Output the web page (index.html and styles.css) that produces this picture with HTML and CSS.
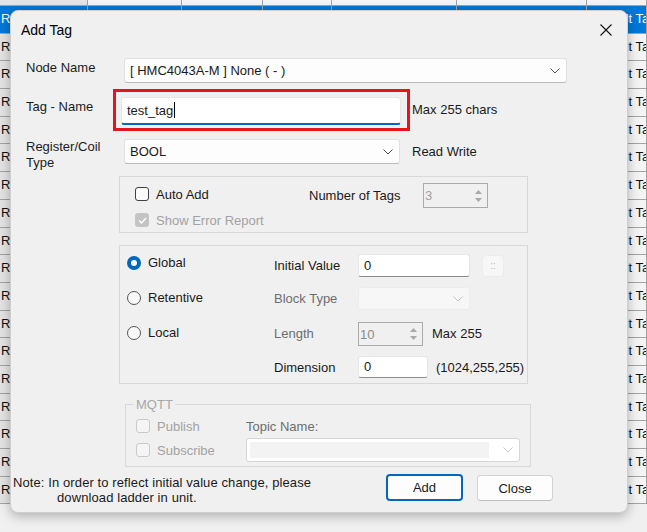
FILE: index.html
```html
<!DOCTYPE html>
<html lang="en">
<head>
    <meta charset="UTF-8">
    <meta name="viewport" content="width=device-width, initial-scale=1.0">
    <title>Add Tag</title>
    <link rel="stylesheet" href="styles.css">
</head>
<body>

    <div class="sheet">
        <div class="row head"><div class="cell"></div><div class="cell"></div><div class="cell"></div><div class="cell"></div><div class="cell"></div><div class="cell"></div><div class="cell"></div></div>
        <div class="row selected"><div class="cell">Read Write</div><div class="cell">300000</div><div class="cell">-</div><div class="cell">0</div><div class="cell"></div><div class="cell">HMC4043A-M</div><div class="cell">Default Tag</div></div>
        <div class="row"><div class="cell">Read Write</div><div class="cell">300001</div><div class="cell">-</div><div class="cell">0</div><div class="cell"></div><div class="cell">HMC4043A-M</div><div class="cell">Default Tag</div></div>
        <div class="row"><div class="cell">Read Write</div><div class="cell">300002</div><div class="cell">-</div><div class="cell">0</div><div class="cell"></div><div class="cell">HMC4043A-M</div><div class="cell">Default Tag</div></div>
        <div class="row"><div class="cell">Read Write</div><div class="cell">300003</div><div class="cell">-</div><div class="cell">0</div><div class="cell"></div><div class="cell">HMC4043A-M</div><div class="cell">Default Tag</div></div>
        <div class="row"><div class="cell">Read Write</div><div class="cell">300004</div><div class="cell">-</div><div class="cell">0</div><div class="cell"></div><div class="cell">HMC4043A-M</div><div class="cell">Default Tag</div></div>
        <div class="row"><div class="cell">Read Write</div><div class="cell">300005</div><div class="cell">-</div><div class="cell">0</div><div class="cell"></div><div class="cell">HMC4043A-M</div><div class="cell">Default Tag</div></div>
        <div class="row"><div class="cell">Read Write</div><div class="cell">300006</div><div class="cell">-</div><div class="cell">0</div><div class="cell"></div><div class="cell">HMC4043A-M</div><div class="cell">Default Tag</div></div>
        <div class="row"><div class="cell">Read Write</div><div class="cell">300007</div><div class="cell">-</div><div class="cell">0</div><div class="cell"></div><div class="cell">HMC4043A-M</div><div class="cell">Default Tag</div></div>
        <div class="row"><div class="cell">Read Write</div><div class="cell">300008</div><div class="cell">-</div><div class="cell">0</div><div class="cell"></div><div class="cell">HMC4043A-M</div><div class="cell">Default Tag</div></div>
        <div class="row"><div class="cell">Read Write</div><div class="cell">300009</div><div class="cell">-</div><div class="cell">0</div><div class="cell"></div><div class="cell">HMC4043A-M</div><div class="cell">Default Tag</div></div>
        <div class="row"><div class="cell">Read Write</div><div class="cell">300010</div><div class="cell">-</div><div class="cell">0</div><div class="cell"></div><div class="cell">HMC4043A-M</div><div class="cell">Default Tag</div></div>
        <div class="row"><div class="cell">Read Write</div><div class="cell">300011</div><div class="cell">-</div><div class="cell">0</div><div class="cell"></div><div class="cell">HMC4043A-M</div><div class="cell">Default Tag</div></div>
        <div class="row"><div class="cell">Read Write</div><div class="cell">300012</div><div class="cell">-</div><div class="cell">0</div><div class="cell"></div><div class="cell">HMC4043A-M</div><div class="cell">Default Tag</div></div>
        <div class="row"><div class="cell">Read Write</div><div class="cell">300013</div><div class="cell">-</div><div class="cell">0</div><div class="cell"></div><div class="cell">HMC4043A-M</div><div class="cell">Default Tag</div></div>
        <div class="row"><div class="cell">Read Write</div><div class="cell">300014</div><div class="cell">-</div><div class="cell">0</div><div class="cell"></div><div class="cell">HMC4043A-M</div><div class="cell">Default Tag</div></div>
        <div class="row"><div class="cell">Read Write</div><div class="cell">300015</div><div class="cell">-</div><div class="cell">0</div><div class="cell"></div><div class="cell">HMC4043A-M</div><div class="cell">Default Tag</div></div>
        <div class="row"><div class="cell">Read Write</div><div class="cell">300016</div><div class="cell">-</div><div class="cell">0</div><div class="cell"></div><div class="cell">HMC4043A-M</div><div class="cell">Default Tag</div></div>
        <div class="row"><div class="cell">Read Only</div><div class="cell">300000</div><div class="cell">-</div><div class="cell">0</div><div class="cell"></div><div class="cell">HMC4043A-M</div><div class="cell">Default Tag</div></div>
    </div>

    <div class="dialog">
        <div class="titlebar">
            <span>Add Tag</span>
            <svg class="close-x" width="12" height="12" viewBox="0 0 12 12"><path d="M0.5 0.5 L11.5 11.5 M11.5 0.5 L0.5 11.5" stroke="#111" stroke-width="1.1" fill="none"/></svg>
        </div>

        <div class="content">
            <div class="field node-row">
                <div class="field-label">Node Name</div>
                <div class="combo wide">
                    <span>[ HMC4043A-M ] None ( - )</span>
                    <svg width="10" height="6" viewBox="0 0 10 6"><polyline points="0.5,0.5 5,5 9.5,0.5" stroke="#555" fill="none"/></svg>
                </div>
            </div>

            <div class="field tag-row">
                <div class="field-label">Tag - Name</div>
                <div class="highlight">
                    <div class="text-input focused">test_tag<span class="caret"></span></div>
                </div>
                <div class="hint tall">Max 255 chars</div>
            </div>

            <div class="field type-row">
                <div class="field-label two-line">Register/Coil<br>Type</div>
                <div class="combo mid">
                    <span>BOOL</span>
                    <svg width="10" height="6" viewBox="0 0 10 6"><polyline points="0.5,0.5 5,5 9.5,0.5" stroke="#555" fill="none"/></svg>
                </div>
                <div class="hint rw">Read Write</div>
            </div>

            <div class="group auto-group">
                <div class="checks">
                    <div class="check"><span class="box"></span>Auto Add</div>
                    <div class="check disabled"><span class="box ticked"><svg width="9" height="7" viewBox="0 0 9 7"><polyline points="1,3.5 3.5,6 8,1" stroke="#fff" stroke-width="1.3" fill="none"/></svg></span>Show Error Report</div>
                </div>
                <div class="num-label">Number of Tags</div>
                <div class="spin">
                    <span class="spin-val">3</span>
                    <span class="spin-btns">
                        <svg width="7" height="4" viewBox="0 0 7 4"><polygon points="0,4 3.5,0 7,4" fill="#a8a8a8"/></svg>
                        <svg width="7" height="4" viewBox="0 0 7 4"><polygon points="0,0 3.5,4 7,0" fill="#a8a8a8"/></svg>
                    </span>
                </div>
            </div>

            <div class="group scope-group">
                <div class="radios">
                    <div class="radio-row"><span class="radio on"></span>Global</div>
                    <div class="radio-row"><span class="radio"></span>Retentive</div>
                    <div class="radio-row"><span class="radio"></span>Local</div>
                </div>
                <div class="props">
                    <div class="prop-label">Initial Value</div>
                    <div class="prop-value">
                        <div class="text-input small">0</div>
                        <div class="dots">::</div>
                    </div>
                    <div class="prop-label disabled-text">Block Type</div>
                    <div class="prop-value">
                        <div class="combo small off">
                            <span></span>
                            <svg width="10" height="6" viewBox="0 0 10 6"><polyline points="0.5,0.5 5,5 9.5,0.5" stroke="#c4c4c4" fill="none"/></svg>
                        </div>
                    </div>
                    <div class="prop-label disabled-text">Length</div>
                    <div class="prop-value">
                        <div class="spin len">
                            <span class="spin-val">10</span>
                            <span class="spin-btns">
                                <svg width="7" height="4" viewBox="0 0 7 4"><polygon points="0,4 3.5,0 7,4" fill="#a8a8a8"/></svg>
                                <svg width="7" height="4" viewBox="0 0 7 4"><polygon points="0,0 3.5,4 7,0" fill="#a8a8a8"/></svg>
                            </span>
                        </div>
                        <span class="after-len">Max 255</span>
                    </div>
                    <div class="prop-label">Dimension</div>
                    <div class="prop-value">
                        <div class="text-input dim">0</div>
                        <span class="after-dim">(1024,255,255)</span>
                    </div>
                </div>
            </div>

            <div class="group mqtt-group">
                <span class="legend">MQTT</span>
                <div class="check off"><span class="box"></span>Publish</div>
                <div class="topic-label">Topic Name:</div>
                <div class="check off"><span class="box"></span>Subscribe</div>
                <div class="combo topic off">
                    <span class="topic-fill"></span>
                    <svg width="10" height="6" viewBox="0 0 10 6"><polyline points="0.5,0.5 5,5 9.5,0.5" stroke="#c4c4c4" fill="none"/></svg>
                </div>
            </div>

            <div class="footer">
                <div class="note">Note: In order to reflect initial value change, please<br><span class="note-2">download ladder in unit.</span></div>
                <button class="btn primary">Add</button>
                <button class="btn">Close</button>
            </div>
        </div>
    </div>

</body>
</html>
```

FILE: styles.css
```css
* {
    box-sizing: border-box;
}
body {
    margin: 0;
    font-family: "Liberation Sans", Arial, sans-serif;
    font-size: 13px;
    color: #1a1a1a;
    background-color: #f0f0f0;
    overflow: hidden;
}

/* background grid */
.sheet {
    width: 647px;
    height: 532px;
    overflow: hidden;
}
.row {
    display: grid;
    grid-template-columns: 88px 94px 81px 69px 125px 130px 1fr;
    height: 27.7px;
}
.row.head {
    height: 6px;
}
.cell {
    border-right: 1px solid #a3a3a3;
    border-bottom: 1px solid #a3a3a3;
    padding: 0 5px;
    line-height: 26px;
    white-space: nowrap;
    overflow: hidden;
    background-color: #f4f4f4;
    color: #111;
}
.cell:first-child {
    padding-left: 1px;
    background-color: #e4e4e4;
}
.cell:last-child {
    padding-left: 4px;
}
.selected .cell {
    background-color: #0078d7;
    color: white;
}

/* dialog */
.dialog {
    position: absolute;
    left: 10px;
    top: 10px;
    width: 618px;
    height: 503px;
    background-color: #f0f0f0;
    border: 1px solid #cfcfcf;
    border-radius: 8px;
    box-shadow: 0 3px 12px rgba(0, 0, 0, 0.28);
}
.titlebar {
    display: flex;
    align-items: center;
    justify-content: space-between;
    height: 37px;
    padding: 0 15px 0 10px;
    font-size: 14px;
    color: #000;
}
.content {
    padding-left: 15px;
}
.field {
    display: flex;
    align-items: flex-start;
}
.field-label {
    width: 98px;
    line-height: 15px;
    padding-top: 2px;
    color: #1b1b1b;
}
.node-row {
    margin-top: 10px;
}
.tag-row {
    margin-top: 6px;
}
.tag-row .field-label {
    padding-top: 10px;
}
.type-row {
    margin-top: 8px;
}
.field-label.two-line {
    line-height: 16px;
    padding-top: 0;
}
.hint {
    white-space: nowrap;
}
.hint.tall {
    line-height: 42px;
    margin-left: 2px;
}
.hint.rw {
    line-height: 25px;
    margin-left: 12px;
}

.combo {
    display: flex;
    align-items: center;
    justify-content: space-between;
    height: 25px;
    padding: 0 6px 0 5px;
    background-color: #fdfdfd;
    border: 1px solid #e1e1e1;
    border-bottom-color: #bcbcbc;
    border-radius: 3px;
    white-space: nowrap;
}
.combo.wide {
    width: 443px;
}
.combo.mid {
    width: 276px;
}
.combo.small {
    width: 112px;
    height: 23px;
}
.combo.off {
    background-color: #f7f7f7;
    border-color: #ececec;
}

.highlight {
    margin-left: -11px;
    width: 297px;
    height: 42px;
    border: 3px solid #e8141c;
    padding: 5px 6px 3px 5px;
}
.text-input {
    height: 28px;
    line-height: 26px;
    padding-left: 5px;
    background-color: #fff;
    border: 1px solid #e6e6e6;
    border-bottom: 1px solid #8c8c8c;
    border-radius: 3px;
}
.text-input.focused {
    border-bottom: 2px solid #0067c0;
}
.caret {
    display: inline-block;
    width: 1px;
    height: 16px;
    margin-left: 1px;
    vertical-align: -3px;
    background-color: #000;
}
.text-input.small {
    width: 112px;
    height: 23px;
    line-height: 21px;
}
.text-input.dim {
    width: 70px;
    height: 22px;
    line-height: 20px;
}

/* group boxes */
.group {
    border: 1px solid #d8d8d8;
}
.auto-group {
    margin-top: 5px;
    margin-left: 93px;
    width: 409px;
    height: 57px;
    display: flex;
    align-items: flex-start;
    padding: 6px 0 0 15px;
}
.checks {
    width: 174px;
    display: flex;
    flex-direction: column;
    gap: 4px;
}
.check {
    display: flex;
    align-items: center;
    gap: 7px;
    height: 22px;
    white-space: nowrap;
}
.box {
    display: inline-flex;
    align-items: center;
    justify-content: center;
    width: 14px;
    height: 14px;
    border: 1px solid #404040;
    border-radius: 3px;
    background-color: #fbfbfb;
}
.box.ticked {
    border: none;
    background-color: #c4c4c4;
}
.check.disabled,
.check.off {
    color: #a2a2a2;
}
.check.off .box {
    border-color: #cacaca;
    background-color: #f5f5f5;
}
.num-label {
    width: 114px;
    line-height: 25px;
}
.spin {
    display: flex;
    width: 65px;
    height: 25px;
    border: 1px solid #aaaaaa;
    background-color: #f0f0f0;
    color: #a0a0a0;
}
.spin-val {
    flex: 1;
    padding-left: 1px;
    line-height: 23px;
}
.spin-btns {
    width: 14px;
    display: flex;
    flex-direction: column;
    justify-content: center;
    align-items: center;
    gap: 4px;
    margin-right: 2px;
}
.spin.len {
    height: 24px;
    color: #8a8a8a;
}

.scope-group {
    margin-top: 12px;
    margin-left: 93px;
    width: 409px;
    height: 139px;
    display: flex;
}
.radios {
    width: 154px;
    padding-left: 7px;
    margin-top: -1px;
}
.radio-row {
    display: flex;
    align-items: center;
    gap: 7px;
    height: 35px;
}
.radio {
    width: 14px;
    height: 14px;
    border-radius: 50%;
    border: 1px solid #555;
    background-color: #f9f9f9;
}
.radio.on {
    border: 4px solid #0067c0;
    background-color: #fff;
}
.props {
    display: grid;
    grid-template-columns: 84px auto;
    grid-template-rows: 33px 33px 37px 30px;
    padding-top: 3px;
    align-items: center;
}
.prop-value {
    display: flex;
    align-items: center;
}
.disabled-text {
    color: #6d6d6d;
}
.dots {
    margin-left: 12px;
    width: 22px;
    height: 22px;
    border: 1px solid #ececec;
    border-radius: 4px;
    background-color: #f7f7f7;
    color: #b8b8b8;
    font-size: 10px;
    line-height: 20px;
    text-align: center;
}
.after-len {
    margin-left: 9px;
}
.after-dim {
    margin-left: 8px;
}

.mqtt-group {
    position: relative;
    margin-top: 20px;
    margin-left: 99px;
    width: 406px;
    height: 63px;
    display: grid;
    grid-template-columns: 110px 1fr;
    grid-template-rows: 24px 24px;
    align-items: center;
    padding: 9px 9px 0 10px;
}
.legend {
    position: absolute;
    top: -8px;
    left: 8px;
    padding: 0 2px;
    line-height: 15px;
    background-color: #f0f0f0;
    color: #a8a8a8;
}
.topic-label {
    color: #6d6d6d;
}
.combo.topic {
    width: 274px;
    height: 24px;
    padding: 3px 6px 3px 3px;
    background-color: #fff;
    border-color: #d6d6d6;
}
.topic-fill {
    flex: 1;
    align-self: stretch;
    margin-right: 14px;
    background-color: #f3f3f3;
}

/* footer */
.footer {
    margin-top: 7px;
    display: flex;
    align-items: flex-start;
}
.note {
    margin-left: -13px;
    width: 373px;
    line-height: 15px;
    white-space: nowrap;
    padding-top: 1px;
    letter-spacing: 0.1px;
}
.note-2 {
    padding-left: 44px;
}
.btn {
    font-family: "Liberation Sans", Arial, sans-serif;
    font-size: 13px;
    color: #1a1a1a;
    width: 76px;
    height: 26px;
    margin-top: 1px;
    margin-left: 14px;
    background-color: #fdfdfd;
    border: 1px solid #d3d3d3;
    border-bottom-color: #bdbdbd;
    border-radius: 4px;
}
.btn.primary {
    width: 77px;
    height: 27px;
    margin-top: 0;
    margin-left: 0;
    border: 2px solid #0067c0;
}
```
